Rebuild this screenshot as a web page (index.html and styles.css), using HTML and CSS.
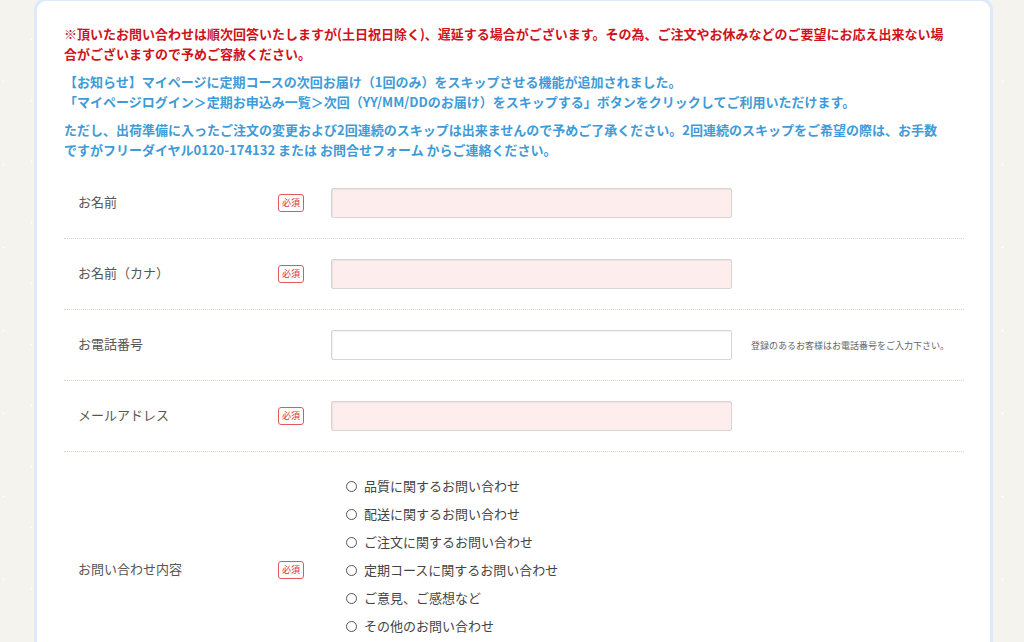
FILE: index.html
```html
<!DOCTYPE html>
<html lang="ja">
<head>
    <meta charset="UTF-8">
    <meta name="viewport" content="width=device-width, initial-scale=1.0">
    <title>お問い合わせ</title>
    <link rel="stylesheet" href="styles.css">
</head>
<body>

<div class="contact-box">
    <p class="notice-red">※頂いたお問い合わせは順次回答いたしますが(土日祝日除く)、遅延する場合がございます。その為、ご注文やお休みなどのご要望にお応え出来ない場合がございますので予めご容赦ください。</p>
    <p class="notice-blue">【お知らせ】マイページに定期コースの次回お届け（1回のみ）をスキップさせる機能が追加されました。<br>「マイページログイン＞定期お申込み一覧＞次回（YY/MM/DDのお届け）をスキップする」ボタンをクリックしてご利用いただけます。</p>
    <p class="notice-blue">ただし、出荷準備に入ったご注文の変更および2回連続のスキップは出来ませんので予めご了承ください。2回連続のスキップをご希望の際は、お手数ですがフリーダイヤル0120-174132 または お問合せフォーム からご連絡ください。</p>

    <form class="contact-form">
        <div class="form-row">
            <label class="form-label" for="name">お名前</label>
            <span class="required">必須</span>
            <div class="form-field">
                <input type="text" id="name" class="input-required">
            </div>
        </div>

        <div class="form-row">
            <label class="form-label" for="kana">お名前（カナ）</label>
            <span class="required">必須</span>
            <div class="form-field">
                <input type="text" id="kana" class="input-required">
            </div>
        </div>

        <div class="form-row">
            <label class="form-label" for="tel">お電話番号</label>
            <span class="required-none"></span>
            <div class="form-field">
                <input type="tel" id="tel">
                <span class="field-note">登録のあるお客様はお電話番号をご入力下さい。</span>
            </div>
        </div>

        <div class="form-row">
            <label class="form-label" for="email">メールアドレス</label>
            <span class="required">必須</span>
            <div class="form-field">
                <input type="email" id="email" class="input-required">
            </div>
        </div>

        <div class="form-row">
            <label class="form-label">お問い合わせ内容</label>
            <span class="required">必須</span>
            <div class="form-field">
                <ul class="radio-list">
                    <li><label><span class="radio"></span>品質に関するお問い合わせ</label></li>
                    <li><label><span class="radio"></span>配送に関するお問い合わせ</label></li>
                    <li><label><span class="radio"></span>ご注文に関するお問い合わせ</label></li>
                    <li><label><span class="radio"></span>定期コースに関するお問い合わせ</label></li>
                    <li><label><span class="radio"></span>ご意見、ご感想など</label></li>
                    <li><label><span class="radio"></span>その他のお問い合わせ</label></li>
                </ul>
            </div>
        </div>
    </form>
</div>

</body>
</html>
```

FILE: styles.css
```css
body {
    margin: 0;
    font-family: "Noto Sans CJK JP", "Noto Sans", sans-serif;
    background-color: #f5f3ee;
    background-image:
        radial-gradient(circle, #ffffff 0.8px, transparent 1.2px),
        radial-gradient(circle, #ffffff 0.8px, transparent 1.2px);
    background-size: 53px 61px, 37px 83px;
    background-position: 5px 9px, 22px 40px;
}
.contact-box {
    box-sizing: border-box;
    width: 959px;
    margin: -2px 0 0 34px;
    padding: 23px 26px 0 27px;
    background: #fff;
    border: 3px solid #dceafb;
    border-radius: 12px;
}
.contact-box p {
    margin: 0 19px 8px 0;
    font-size: 13px;
    line-height: 20px;
    font-weight: bold;
}
.notice-red {
    color: #d0121b;
}
.notice-blue {
    color: #3f9bd7;
}
.contact-form {
    margin-top: 8px;
}
.form-row {
    display: flex;
    align-items: center;
    padding: 20px 0;
    border-bottom: 1px dotted #d8d5cd;
}
.form-label {
    width: 200px;
    padding-left: 14px;
    font-size: 13px;
    line-height: 16px;
    margin-top: -3px;
    color: #555;
}
.required, .required-none {
    box-sizing: border-box;
    width: 26px;
    height: 18px;
    flex-shrink: 0;
}
.required {
    border: 1px solid #e0585e;
    border-radius: 3px;
    color: #d6323a;
    font-size: 9px;
    line-height: 16px;
    text-align: center;
}
.form-field {
    display: flex;
    align-items: center;
    margin-left: 27px;
}
.form-field input {
    width: 401px;
    height: 30px;
    box-sizing: border-box;
    border: 1px solid #d6d6d6;
    border-radius: 2px;
    box-shadow: inset 1px 1px 1px rgba(0, 0, 0, 0.06);
    background: #fff;
    padding: 4px 8px;
}
.form-field .input-required {
    background: #fdeded;
}
.field-note {
    margin-left: 19px;
    font-size: 9px;
    color: #666;
}
.radio-list {
    list-style: none;
    margin: 0;
    padding: 0 0 28px 15px;
}
.radio-list li {
    height: 28px;
    line-height: 28px;
    font-size: 13px;
    color: #444;
}
.radio-list label {
    display: flex;
    align-items: center;
}
.radio {
    width: 9px;
    height: 9px;
    border: 1px solid #555;
    border-radius: 50%;
    margin-right: 7px;
}
```
